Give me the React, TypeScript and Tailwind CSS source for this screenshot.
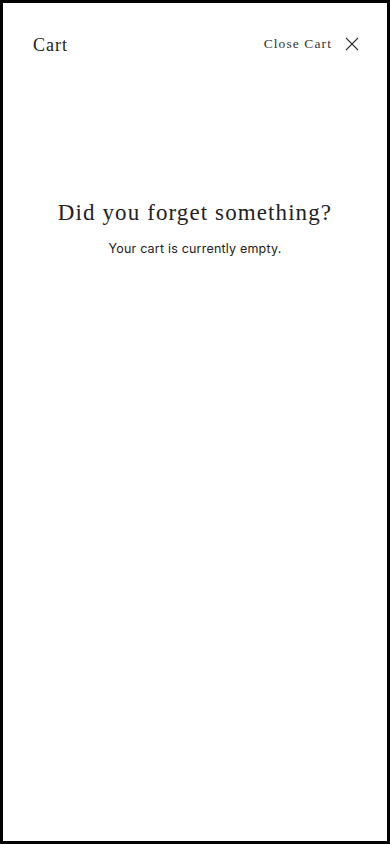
import React from 'react';

const serif = 'font-["Liberation_Serif","DejaVu_Serif",serif]';

export default function App() {
  return (
    <div className="w-[390px] h-[844px] bg-white border-[3px] border-black flex flex-col">
      {/* header */}
      <div className="flex items-center justify-between pl-[30px] pr-[28px] pt-[29px]">
        <h1 className={`${serif} text-[18px] tracking-[1px] text-[#222]`}>Cart</h1>
        <button className="flex items-center gap-[13px] -mt-[3px]">
          <span className={`${serif} text-[13.5px] tracking-[1.1px] text-[#333]`}>Close Cart</span>
          <svg width="14" height="14" viewBox="0 0 14 14" fill="none" stroke="#333" strokeWidth="1.1">
            <path d="M1 1l12 12M13 1L1 13" />
          </svg>
        </button>
      </div>

      {/* empty state */}
      <div className="flex flex-col items-center pt-[137px]">
        <h2 className={`${serif} text-[23px] tracking-[1.1px] text-[#222]`}>Did you forget something?</h2>
        <p className="mt-[9px] font-['Inter',sans-serif] text-[12.5px] tracking-[0.2px] text-[#222]">
          Your cart is currently empty.
        </p>
      </div>
    </div>
  );
}
